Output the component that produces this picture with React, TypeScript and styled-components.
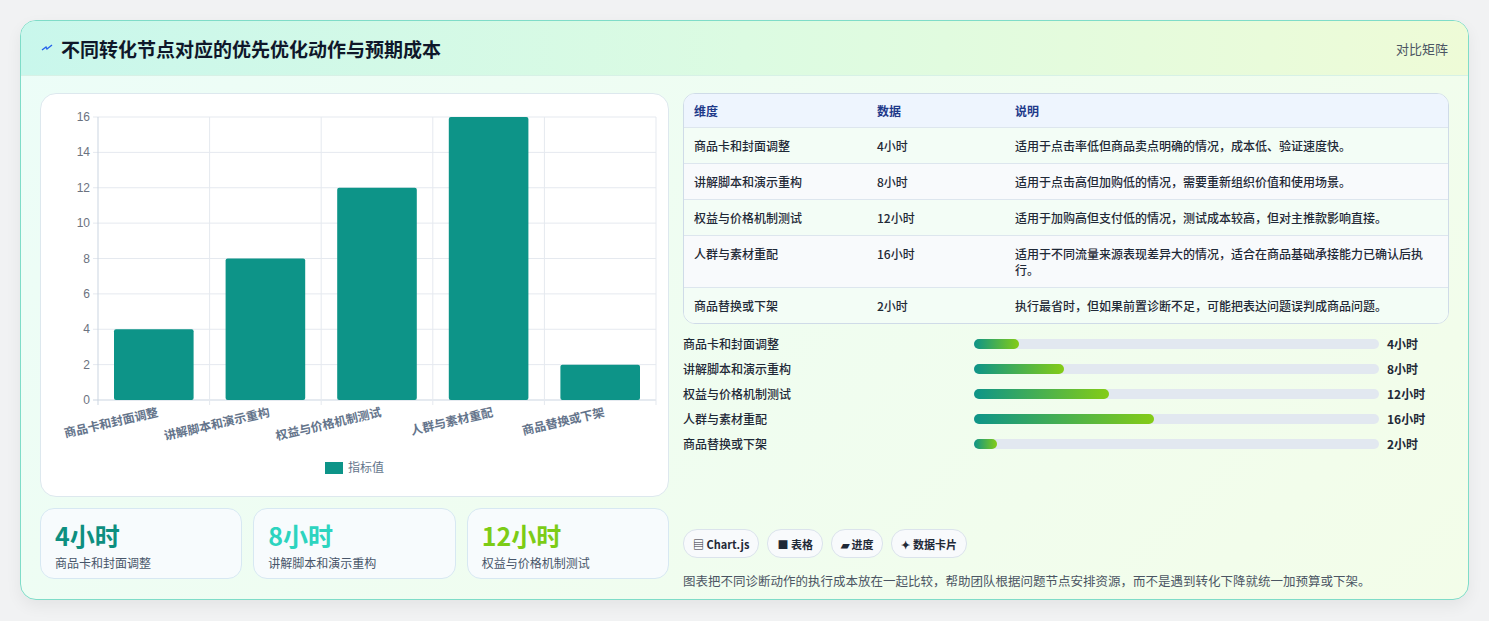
import React from "react";
import styled, { createGlobalStyle } from "styled-components";

const G = createGlobalStyle`
  html,body{margin:0;padding:0;background:#f1f2f3;}
  body{font-family:"Noto Sans CJK SC","Noto Sans",sans-serif;}
`;
const Page = styled.div`padding:20px 20px 21px 20px;width:1449px;`;
const Card = styled.div`
  border:1px solid #7fdcc8;border-radius:16px;overflow:hidden;height:578px;
  background:linear-gradient(135deg,#ecfdf8 0%,#f3fde9 100%);
  box-shadow:0 6px 16px rgba(0,0,0,0.06);display:flex;flex-direction:column;
`;
const Header = styled.div`
  height:54px;display:flex;align-items:center;justify-content:space-between;padding:0 20px;
  background:linear-gradient(90deg,#c9f7ec 0%,#dcfbe2 50%,#eefbd7 100%);
  border-bottom:1px solid #d7f1e6;
`;
const Title = styled.div`display:flex;align-items:center;gap:8px;font-size:19px;font-weight:700;color:#0f172a;`;
const Tag = styled.div`font-size:13px;color:#4b5563;`;
const Body = styled.div`display:flex;gap:14px;padding:17px 19px 0 19px;flex:1;`;
const Left = styled.div`width:629px;display:flex;flex-direction:column;gap:11px;`;
const ChartBox = styled.div`height:402px;border:1px solid #dde8ee;border-radius:16px;background:#fff;`;
const Stats = styled.div`display:grid;grid-template-columns:repeat(3,1fr);gap:11px;`;
const Stat = styled.div`height:71px;border:1px solid #d7e8f2;border-radius:14px;background:#f7fbfd;padding:10px 14px;box-sizing:border-box;`;
const StatV = styled.div<{c:string}>`font-size:25px;font-weight:700;color:${p=>p.c};line-height:32px;`;
const StatL = styled.div`font-size:12px;color:#475569;margin-top:3px;`;
const Right = styled.div`width:768px;display:flex;flex-direction:column;`;
const Table = styled.div`border:1px solid #cfdbe8;border-radius:12px;overflow:hidden;background:#fff;`;
const Row = styled.div<{h?:boolean;alt?:boolean}>`
  display:grid;grid-template-columns:183px 138px 1fr;padding:0 10px;
  font-size:12px;color:${p=>p.h?"#1e3a8a":"#1f2937"};font-weight:${p=>p.h?600:500};
  background:${p=>p.h?"#eef5fe":p.alt?"#f8fafc":"#f3fdf6"};
  border-top:${p=>p.h?"none":"1px solid #dde6ee"};padding-top:${p=>p.h?"9px":"10px"};padding-bottom:${p=>p.h?"8px":"9px"};
  line-height:16px;
`;
const Bars = styled.div`display:flex;flex-direction:column;gap:8px;margin-top:11px;`;
const BarRow = styled.div`display:grid;grid-template-columns:291px 405px 1fr;align-items:center;gap:0;font-size:12px;color:#1f2937;font-weight:500;height:17px;`;
const Track = styled.div`height:10px;border-radius:5px;background:#e2e8f0;`;
const Fill = styled.div`height:10px;border-radius:5px;background:linear-gradient(90deg,#0d9488,#84cc16);`;
const Val = styled.div`padding-left:8px;font-weight:700;`;
const Chips = styled.div`display:flex;gap:8px;margin-top:77px;`;
const Chip = styled.div`height:27px;padding:0 9px;border:1px solid #dbe3ec;border-radius:14px;background:#f8fafc;font-size:11px;font-weight:600;color:#1f2937;display:flex;align-items:center;gap:3px;`;
const Note = styled.div`font-size:12.5px;color:#4b5563;margin-top:13px;`;

const cats=["商品卡和封面调整","讲解脚本和演示重构","权益与价格机制测试","人群与素材重配","商品替换或下架"];
const vals=[4,8,12,16,2];
const desc=["适用于点击率低但商品卖点明确的情况，成本低、验证速度快。","适用于点击高但加购低的情况，需要重新组织价值和使用场景。","适用于加购高但支付低的情况，测试成本较高，但对主推款影响直接。","适用于不同流量来源表现差异大的情况，适合在商品基础承接能力已确认后执行。","执行最省时，但如果前置诊断不足，可能把表达问题误判成商品问题。"];

function Chart(){
  const x0=57,x1=615,y0=23,y1=306,cw=(x1-x0)/5;
  const y=(v:number)=>y1-(v/16)*(y1-y0);
  return <svg width="627" height="400" style={{display:"block"}}>
    {[0,2,4,6,8,10,12,14,16].map(v=><g key={v}>
      <line x1={x0-5} x2={x1} y1={y(v)} y2={y(v)} stroke={v===0?"#cbd5e1":"#e5e9ef"}/>
      <text x={x0-8} y={y(v)+4} fontSize="12" fill="#6b7280" textAnchor="end" fontFamily="Liberation Sans">{v}</text>
    </g>)}
    {[0,1,2,3,4,5].map(i=><line key={i} x1={x0+i*cw} x2={x0+i*cw} y1={y0} y2={y1+5} stroke={i===0?"#cbd5e1":"#e5e9ef"}/>)}
    {vals.map((v,i)=><rect key={i} x={x0+i*cw+16} width={cw-32} y={y(v)} height={y1-y(v)} rx="2" fill="#0d9488"/>)}
    {cats.map((c,i)=><text key={c} transform={`translate(${x0+i*cw+cw/2+5},${y1+16}) rotate(-13)`} textAnchor="end" fontSize="12" fontWeight="600" fill="#64748b">{c}</text>)}
    <rect x="284" y="368" width="18" height="12" fill="#0d9488"/>
    <text x="307" y="378" fontSize="12" fill="#64748b">指标值</text>
  </svg>;
}

export default function App(){
  return <Page><G/><Card>
    <Header><Title><svg width="12" height="12" viewBox="0 0 12 12"><path d="M1 8 L5 5 L6 7 L11 3" stroke="#2563eb" strokeWidth="1.4" fill="none"/></svg>不同转化节点对应的优先优化动作与预期成本</Title><Tag>对比矩阵</Tag></Header>
    <Body>
      <Left>
        <ChartBox><Chart/></ChartBox>
        <Stats>
          <Stat><StatV c="#0d8f80">4小时</StatV><StatL>商品卡和封面调整</StatL></Stat>
          <Stat><StatV c="#2dd4bf">8小时</StatV><StatL>讲解脚本和演示重构</StatL></Stat>
          <Stat><StatV c="#7ccc16">12小时</StatV><StatL>权益与价格机制测试</StatL></Stat>
        </Stats>
      </Left>
      <Right>
        <Table>
          <Row h><span>维度</span><span>数据</span><span>说明</span></Row>
          {cats.map((c,i)=><Row key={c} alt={i%2===1}><span>{c}</span><span>{vals[i]}小时</span><span>{desc[i]}</span></Row>)}
        </Table>
        <Bars>{cats.map((c,i)=><BarRow key={c}><span>{c}</span><Track><Fill style={{width:`${vals[i]/36*100}%`}}/></Track><Val>{vals[i]}小时</Val></BarRow>)}</Bars>
        <Chips><Chip>▤ Chart.js</Chip><Chip>■ 表格</Chip><Chip>▰ 进度</Chip><Chip>✦ 数据卡片</Chip></Chips>
        <Note>图表把不同诊断动作的执行成本放在一起比较，帮助团队根据问题节点安排资源，而不是遇到转化下降就统一加预算或下架。</Note>
      </Right>
    </Body>
  </Card></Page>;
}
